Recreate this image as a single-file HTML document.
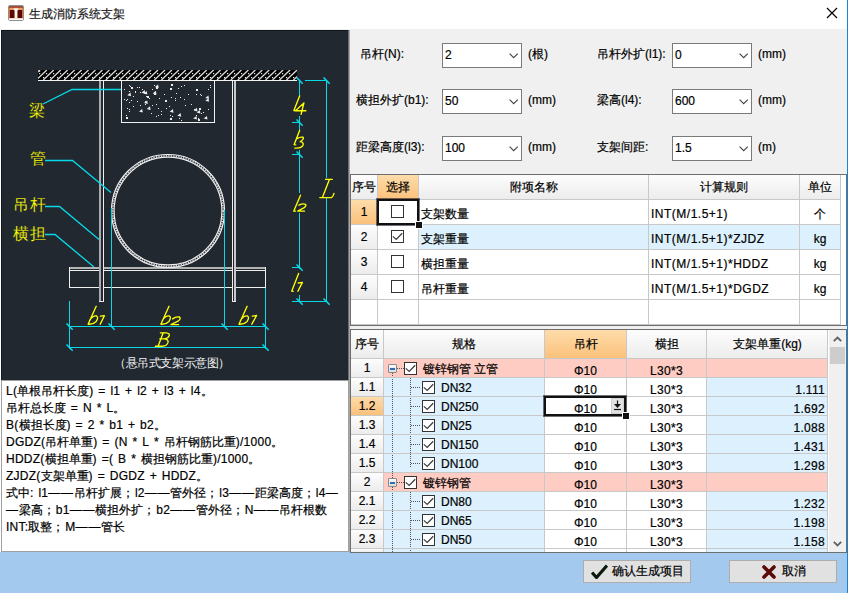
<!DOCTYPE html><html><head><meta charset="utf-8"><style>
*{margin:0;padding:0;box-sizing:border-box}
html,body{width:848px;height:593px;overflow:hidden;background:#f0f0f0;font-family:"Liberation Sans",sans-serif;font-size:12px;color:#000;-webkit-text-stroke:0.2px currentColor}
.a{position:absolute}
.t{position:absolute;white-space:nowrap;line-height:14px}
#title{left:0;top:0;width:848px;height:29px;background:#fff}
#rb{left:847px;top:0;width:1px;height:593px;background:#1883d7}
#txt{left:1px;top:380px;width:348px;height:172px;background:#fff;border:1px solid #a0a0a0}
#txt div{position:absolute;left:4px;white-space:nowrap;line-height:17px;word-spacing:1.5px}
#bottom{left:0;top:552px;width:847px;height:41px;background:#a4c9ee}
.btn{position:absolute;height:23px;background:#e1e1e1;border:1px solid #adadad}
.cb{position:absolute;width:80px;height:25px;background:#fff;border:1px solid #7a7a7a}
.cb span{position:absolute;left:2px;top:4px;line-height:14px;font-size:12px}
.cb svg{position:absolute;left:66px;top:9px}
.grid{position:absolute;background:#fff;border:1px solid #6e6e6e;overflow:hidden}
.chk{position:absolute;width:13px;height:13px;border:1px solid #333;background:#fff}
.chk svg{position:absolute;left:1px;top:1px}
</style></head><body>
<div id="title" class="a">
<svg class="a" style="left:8px;top:5px" width="16" height="16" viewBox="0 0 16 16">
<rect x="0.5" y="0.5" width="15" height="15" rx="1.2" fill="#f2f2f2" stroke="#8e8e8e"/>
<rect x="1" y="1" width="14" height="12.5" fill="#d8702c"/>
<rect x="1" y="1" width="14" height="1.8" fill="#a44a38"/>
<rect x="2" y="5" width="4.5" height="8" fill="#5c0606"/>
<rect x="9.5" y="5" width="4.5" height="8" fill="#5c0606"/>
<rect x="1.5" y="3" width="5" height="1.8" fill="#f0a060"/>
<rect x="9.5" y="3" width="5" height="1.8" fill="#f0a060"/>
<path d="M5.8 3.2h4.4v2h-0.9v8.3h-2.6v-8.3h-0.9z" fill="#eef8f8"/>
<rect x="1" y="13.5" width="14" height="1.5" fill="#fafafa"/>
</svg>
<div class="t" style="left:29px;top:7px;color:#1a1a1a">生成消防系统支架</div>
<svg class="a" style="left:826px;top:7px" width="12" height="12" viewBox="0 0 12 12"><path d="M1 1L11 11M11 1L1 11" stroke="#000" stroke-width="1.2"/></svg>
</div>
<div id="rb" class="a"></div>
<svg class="a" style="left:1px;top:30px" width="348" height="350" viewBox="1 30 348 350" shape-rendering="auto">
<rect x="1" y="30" width="348" height="350" fill="#212830"/>
<rect x="1" y="30" width="348" height="1" fill="#10161c"/><rect x="1" y="30" width="1" height="350" fill="#10161c"/>
<rect x="348" y="30" width="1" height="350" fill="#6a6f76"/>
<defs><clipPath id="slab"><rect x="38" y="70" width="259" height="10"/></clipPath></defs>
<rect x="38" y="70" width="259" height="10" fill="#000"/>
<g clip-path="url(#slab)" stroke="#dcdcdc" stroke-width="1.3">
<line x1="29.35" y1="80" x2="39.85" y2="70"/>
<line x1="36.30" y1="80" x2="46.80" y2="70"/>
<line x1="43.25" y1="80" x2="53.75" y2="70"/>
<line x1="50.20" y1="80" x2="60.70" y2="70"/>
<line x1="57.15" y1="80" x2="67.65" y2="70"/>
<line x1="64.10" y1="80" x2="74.60" y2="70"/>
<line x1="71.05" y1="80" x2="81.55" y2="70"/>
<line x1="78.00" y1="80" x2="88.50" y2="70"/>
<line x1="84.95" y1="80" x2="95.45" y2="70"/>
<line x1="91.90" y1="80" x2="102.40" y2="70"/>
<line x1="98.85" y1="80" x2="109.35" y2="70"/>
<line x1="105.80" y1="80" x2="116.30" y2="70"/>
<line x1="112.75" y1="80" x2="123.25" y2="70"/>
<line x1="119.70" y1="80" x2="130.20" y2="70"/>
<line x1="126.65" y1="80" x2="137.15" y2="70"/>
<line x1="133.60" y1="80" x2="144.10" y2="70"/>
<line x1="140.55" y1="80" x2="151.05" y2="70"/>
<line x1="147.50" y1="80" x2="158.00" y2="70"/>
<line x1="154.45" y1="80" x2="164.95" y2="70"/>
<line x1="161.40" y1="80" x2="171.90" y2="70"/>
<line x1="168.35" y1="80" x2="178.85" y2="70"/>
<line x1="175.30" y1="80" x2="185.80" y2="70"/>
<line x1="182.25" y1="80" x2="192.75" y2="70"/>
<line x1="189.20" y1="80" x2="199.70" y2="70"/>
<line x1="196.15" y1="80" x2="206.65" y2="70"/>
<line x1="203.10" y1="80" x2="213.60" y2="70"/>
<line x1="210.05" y1="80" x2="220.55" y2="70"/>
<line x1="217.00" y1="80" x2="227.50" y2="70"/>
<line x1="223.95" y1="80" x2="234.45" y2="70"/>
<line x1="230.90" y1="80" x2="241.40" y2="70"/>
<line x1="237.85" y1="80" x2="248.35" y2="70"/>
<line x1="244.80" y1="80" x2="255.30" y2="70"/>
<line x1="251.75" y1="80" x2="262.25" y2="70"/>
<line x1="258.70" y1="80" x2="269.20" y2="70"/>
<line x1="265.65" y1="80" x2="276.15" y2="70"/>
<line x1="272.60" y1="80" x2="283.10" y2="70"/>
<line x1="279.55" y1="80" x2="290.05" y2="70"/>
<line x1="286.50" y1="80" x2="297.00" y2="70"/>
<line x1="293.45" y1="80" x2="303.95" y2="70"/>
</g>
<g fill="#e8e8e8">
<rect x="39" y="73" width="1.2" height="1.2"/>
<rect x="46" y="73" width="1.2" height="1.2"/>
<rect x="43" y="77" width="1.2" height="1.2"/>
<rect x="53" y="73" width="1.2" height="1.2"/>
<rect x="50" y="77" width="1.2" height="1.2"/>
<rect x="60" y="73" width="1.2" height="1.2"/>
<rect x="57" y="77" width="1.2" height="1.2"/>
<rect x="67" y="73" width="1.2" height="1.2"/>
<rect x="64" y="77" width="1.2" height="1.2"/>
<rect x="74" y="73" width="1.2" height="1.2"/>
<rect x="71" y="77" width="1.2" height="1.2"/>
<rect x="81" y="73" width="1.2" height="1.2"/>
<rect x="78" y="77" width="1.2" height="1.2"/>
<rect x="88" y="73" width="1.2" height="1.2"/>
<rect x="85" y="77" width="1.2" height="1.2"/>
<rect x="95" y="73" width="1.2" height="1.2"/>
<rect x="92" y="77" width="1.2" height="1.2"/>
<rect x="102" y="73" width="1.2" height="1.2"/>
<rect x="99" y="77" width="1.2" height="1.2"/>
<rect x="109" y="73" width="1.2" height="1.2"/>
<rect x="106" y="77" width="1.2" height="1.2"/>
<rect x="116" y="73" width="1.2" height="1.2"/>
<rect x="113" y="77" width="1.2" height="1.2"/>
<rect x="122" y="73" width="1.2" height="1.2"/>
<rect x="119" y="77" width="1.2" height="1.2"/>
<rect x="129" y="73" width="1.2" height="1.2"/>
<rect x="126" y="77" width="1.2" height="1.2"/>
<rect x="136" y="73" width="1.2" height="1.2"/>
<rect x="133" y="77" width="1.2" height="1.2"/>
<rect x="143" y="73" width="1.2" height="1.2"/>
<rect x="140" y="77" width="1.2" height="1.2"/>
<rect x="150" y="73" width="1.2" height="1.2"/>
<rect x="147" y="77" width="1.2" height="1.2"/>
<rect x="157" y="73" width="1.2" height="1.2"/>
<rect x="154" y="77" width="1.2" height="1.2"/>
<rect x="164" y="73" width="1.2" height="1.2"/>
<rect x="161" y="77" width="1.2" height="1.2"/>
<rect x="171" y="73" width="1.2" height="1.2"/>
<rect x="168" y="77" width="1.2" height="1.2"/>
<rect x="178" y="73" width="1.2" height="1.2"/>
<rect x="175" y="77" width="1.2" height="1.2"/>
<rect x="185" y="73" width="1.2" height="1.2"/>
<rect x="182" y="77" width="1.2" height="1.2"/>
<rect x="192" y="73" width="1.2" height="1.2"/>
<rect x="189" y="77" width="1.2" height="1.2"/>
<rect x="199" y="73" width="1.2" height="1.2"/>
<rect x="196" y="77" width="1.2" height="1.2"/>
<rect x="206" y="73" width="1.2" height="1.2"/>
<rect x="203" y="77" width="1.2" height="1.2"/>
<rect x="213" y="73" width="1.2" height="1.2"/>
<rect x="210" y="77" width="1.2" height="1.2"/>
<rect x="220" y="73" width="1.2" height="1.2"/>
<rect x="217" y="77" width="1.2" height="1.2"/>
<rect x="227" y="73" width="1.2" height="1.2"/>
<rect x="224" y="77" width="1.2" height="1.2"/>
<rect x="234" y="73" width="1.2" height="1.2"/>
<rect x="231" y="77" width="1.2" height="1.2"/>
<rect x="241" y="73" width="1.2" height="1.2"/>
<rect x="238" y="77" width="1.2" height="1.2"/>
<rect x="248" y="73" width="1.2" height="1.2"/>
<rect x="245" y="77" width="1.2" height="1.2"/>
<rect x="254" y="73" width="1.2" height="1.2"/>
<rect x="251" y="77" width="1.2" height="1.2"/>
<rect x="261" y="73" width="1.2" height="1.2"/>
<rect x="258" y="77" width="1.2" height="1.2"/>
<rect x="268" y="73" width="1.2" height="1.2"/>
<rect x="265" y="77" width="1.2" height="1.2"/>
<rect x="275" y="73" width="1.2" height="1.2"/>
<rect x="272" y="77" width="1.2" height="1.2"/>
<rect x="282" y="73" width="1.2" height="1.2"/>
<rect x="279" y="77" width="1.2" height="1.2"/>
<rect x="289" y="73" width="1.2" height="1.2"/>
<rect x="286" y="77" width="1.2" height="1.2"/>
<rect x="293" y="77" width="1.2" height="1.2"/>
<rect x="39" y="70.5" width="1.2" height="1.2"/>
</g>
<rect x="38" y="80" width="259" height="1" fill="#f4f4f4"/>
<rect x="121" y="81" width="1" height="42" fill="#f0f0f0"/>
<rect x="214" y="81" width="1" height="42" fill="#f0f0f0"/>
<rect x="121" y="122" width="94" height="1" fill="#f0f0f0"/>
<g fill="#ececec">
<rect x="152" y="89" width="1" height="1"/>
<rect x="181" y="86" width="1" height="1"/>
<rect x="171" y="97" width="1" height="1"/>
<rect x="129" y="102" width="1" height="1"/>
<rect x="127" y="99" width="1" height="1"/>
<rect x="130" y="86" width="1" height="1"/>
<rect x="161" y="114" width="1" height="1"/>
<rect x="135" y="91" width="1" height="1"/>
<rect x="179" y="118" width="1" height="1"/>
<rect x="175" y="98" width="1" height="1"/>
<rect x="210" y="85" width="1" height="1"/>
<rect x="200" y="94" width="1" height="1"/>
<rect x="137" y="87" width="1" height="1"/>
<rect x="151" y="113" width="1" height="1"/>
<rect x="140" y="105" width="1" height="1"/>
<rect x="180" y="97" width="1" height="1"/>
<rect x="172" y="85" width="1" height="1"/>
<rect x="129" y="91" width="1" height="1"/>
<rect x="184" y="99" width="1" height="1"/>
<rect x="152" y="105" width="1" height="1"/>
<rect x="164" y="94" width="1" height="1"/>
<rect x="194" y="109" width="1" height="1"/>
<rect x="145" y="104" width="1" height="1"/>
<rect x="170" y="115" width="1" height="1"/>
<rect x="188" y="94" width="1" height="1"/>
<rect x="210" y="87" width="1" height="1"/>
<rect x="161" y="111" width="1" height="1"/>
<rect x="137" y="101" width="1" height="1"/>
<rect x="127" y="108" width="1" height="1"/>
<rect x="191" y="104" width="1" height="1"/>
<rect x="201" y="95" width="1" height="1"/>
<rect x="185" y="105" width="1" height="1"/>
<rect x="175" y="100" width="1" height="1"/>
<rect x="198" y="118" width="1" height="1"/>
<rect x="166" y="108" width="1" height="1"/>
<rect x="129" y="109" width="1" height="1"/>
<rect x="181" y="120" width="1" height="1"/>
<rect x="196" y="94" width="1" height="1"/>
<rect x="158" y="108" width="1" height="1"/>
<rect x="126" y="100" width="1" height="1"/>
<rect x="139" y="87" width="1" height="1"/>
<rect x="129" y="111" width="1" height="1"/>
<rect x="135" y="92" width="1" height="1"/>
<rect x="158" y="115" width="1" height="1"/>
<rect x="131" y="100" width="1" height="1"/>
<rect x="172" y="116" width="1" height="1"/>
<rect x="196" y="115" width="1" height="1"/>
<rect x="149" y="98" width="1" height="1"/>
<rect x="156" y="116" width="1" height="1"/>
<rect x="208" y="89" width="1" height="1"/>
<rect x="140" y="92" width="1" height="1"/>
<rect x="145" y="101" width="1" height="1"/>
<rect x="176" y="93" width="1" height="1"/>
<rect x="124" y="99" width="1" height="1"/>
<rect x="156" y="104" width="1" height="1"/>
<rect x="208" y="109" width="1" height="1"/>
<rect x="169" y="106" width="1" height="1"/>
<rect x="184" y="85" width="1" height="1"/>
<rect x="203" y="112" width="1" height="1"/>
<rect x="201" y="113" width="1" height="1"/>
<rect x="159" y="98" width="1" height="1"/>
<rect x="133" y="106" width="1" height="1"/>
<rect x="129" y="85" width="1" height="1"/>
<rect x="142" y="89" width="1" height="1"/>
<rect x="154" y="85" width="1" height="1"/>
<rect x="124" y="89" width="1" height="1"/>
<rect x="133" y="96" width="1" height="1"/>
<rect x="126" y="115" width="1" height="1"/>
<rect x="178" y="88" width="1" height="1"/>
<rect x="146" y="96" width="1" height="1"/>
<rect x="156" y="87" width="2" height="2"/>
<rect x="198" y="119" width="2" height="2"/>
<rect x="165" y="100" width="2" height="2"/>
<rect x="131" y="87" width="2" height="2"/>
<rect x="154" y="93" width="2" height="2"/>
<rect x="196" y="89" width="2" height="2"/>
<rect x="126" y="117" width="2" height="2"/>
<rect x="170" y="88" width="2" height="2"/>
<rect x="171" y="84" width="2" height="2"/>
<rect x="170" y="118" width="2" height="2"/>
<rect x="199" y="108" width="2" height="2"/>
<rect x="147" y="96" width="2" height="2"/>
<path d="M139.0 111.5 l3.2 -2.6 l0.6 3.6 z"/>
<path d="M169.7 111.7 l3.2 -2.6 l0.6 3.6 z"/>
<path d="M152.7 93.4 l3.2 -2.6 l0.6 3.6 z"/>
<path d="M193.2 118.5 l3.2 -2.6 l0.6 3.6 z"/>
<path d="M196.6 112.6 l3.2 -2.6 l0.6 3.6 z"/>
<path d="M193.7 110.4 l3.2 -2.6 l0.6 3.6 z"/>
<path d="M144.0 103.1 l3.2 -2.6 l0.6 3.6 z"/>
<path d="M154.9 87.0 l3.2 -2.6 l0.6 3.6 z"/>
<path d="M127.3 95.2 l3.2 -2.6 l0.6 3.6 z"/>
<path d="M146.8 108.9 l3.2 -2.6 l0.6 3.6 z"/>
<path d="M205.3 100.8 l3.2 -2.6 l0.6 3.6 z"/>
<path d="M203.7 118.6 l3.2 -2.6 l0.6 3.6 z"/>
<path d="M205.2 98.0 l3.2 -2.6 l0.6 3.6 z"/>
<path d="M143.5 93.5 l3.2 -2.6 l0.6 3.6 z"/>
<path d="M141.5 92.7 l3.2 -2.6 l0.6 3.6 z"/>
<path d="M177.4 115.7 l3.2 -2.6 l0.6 3.6 z"/>
</g>
<rect x="69" y="267" width="197" height="2" fill="#b4b4b4"/>
<rect x="69" y="270" width="197" height="1" fill="#f0f0f0"/>
<rect x="69" y="287" width="197" height="1" fill="#f0f0f0"/>
<rect x="69" y="267" width="1" height="21" fill="#f0f0f0"/>
<rect x="265" y="267" width="1" height="21" fill="#f0f0f0"/>
<rect x="99" y="81" width="5" height="221" fill="#212830"/>
<rect x="99" y="81" width="2" height="221" fill="#a8aaad"/>
<rect x="103" y="81" width="1" height="221" fill="#eeeeee"/>
<rect x="99" y="301" width="5" height="1" fill="#e8e8e8"/>
<rect x="232" y="81" width="4" height="221" fill="#212830"/>
<rect x="232" y="81" width="1" height="221" fill="#eeeeee"/>
<rect x="234" y="81" width="2" height="221" fill="#c8c8c8"/>
<rect x="232" y="301" width="4" height="1" fill="#e8e8e8"/>
<circle cx="168" cy="211" r="56.5" fill="none" stroke="#f0f0f0" stroke-width="1.2"/>
<circle cx="168" cy="211" r="53.9" fill="none" stroke="#f0f0f0" stroke-width="1.2"/>
<circle cx="168" cy="211" r="55.2" fill="none" stroke="#d8d8d8" stroke-width="1.6" stroke-dasharray="1.3 1.2"/>
<polyline points="43.0,104.0 72.0,89.5 121.0,89.5" fill="none" stroke="#08d8e8" stroke-width="1.3"/>
<polyline points="45.0,160.5 72.5,160.5 111.0,192.5" fill="none" stroke="#08d8e8" stroke-width="1.3"/>
<polyline points="45.0,206.5 59.5,206.5 99.0,239.5" fill="none" stroke="#08d8e8" stroke-width="1.3"/>
<polyline points="45.0,234.5 55.0,234.5 94.0,267.0" fill="none" stroke="#08d8e8" stroke-width="1.3"/>
<rect x="111" y="208" width="1" height="119" fill="#08d8e8"/>
<rect x="224" y="210" width="1" height="117" fill="#08d8e8"/>
<rect x="69" y="301" width="1" height="48" fill="#08d8e8"/>
<rect x="265" y="288" width="1" height="61" fill="#08d8e8"/>
<rect x="69" y="326" width="197" height="1" fill="#08d8e8"/>
<rect x="69" y="347" width="197" height="1" fill="#08d8e8"/>
<line x1="66.5" y1="323.5" x2="72.7" y2="329.7" stroke="#08d8e8" stroke-width="1.6"/>
<line x1="108.5" y1="323.5" x2="114.7" y2="329.7" stroke="#08d8e8" stroke-width="1.6"/>
<line x1="221.5" y1="323.5" x2="227.7" y2="329.7" stroke="#08d8e8" stroke-width="1.6"/>
<line x1="262.5" y1="323.5" x2="268.7" y2="329.7" stroke="#08d8e8" stroke-width="1.6"/>
<line x1="66.5" y1="344.5" x2="72.7" y2="350.7" stroke="#08d8e8" stroke-width="1.6"/>
<line x1="262.5" y1="344.5" x2="268.7" y2="350.7" stroke="#08d8e8" stroke-width="1.6"/>
<rect x="299" y="80" width="1" height="222" fill="#08d8e8"/>
<rect x="326" y="80" width="1" height="222" fill="#08d8e8"/>
<rect x="305" y="80" width="22" height="1" fill="#08d8e8"/>
<rect x="292" y="122" width="8" height="1" fill="#08d8e8"/>
<rect x="292" y="154" width="8" height="1" fill="#08d8e8"/>
<rect x="292" y="267" width="8" height="1" fill="#08d8e8"/>
<rect x="292" y="301" width="35" height="1" fill="#08d8e8"/>
<rect x="296" y="96" width="8" height="20" fill="#212830"/>
<rect x="296" y="130" width="8" height="20" fill="#212830"/>
<rect x="296" y="193" width="8" height="20" fill="#212830"/>
<rect x="296" y="269" width="8" height="26" fill="#212830"/>
<rect x="323" y="178" width="8" height="20" fill="#212830"/>
<line x1="296.5" y1="77.5" x2="302.7" y2="83.7" stroke="#08d8e8" stroke-width="1.6"/>
<line x1="296.5" y1="119.5" x2="302.7" y2="125.7" stroke="#08d8e8" stroke-width="1.6"/>
<line x1="296.5" y1="151.5" x2="302.7" y2="157.7" stroke="#08d8e8" stroke-width="1.6"/>
<line x1="296.5" y1="264.5" x2="302.7" y2="270.7" stroke="#08d8e8" stroke-width="1.6"/>
<line x1="296.5" y1="298.5" x2="302.7" y2="304.7" stroke="#08d8e8" stroke-width="1.6"/>
<line x1="323.5" y1="77.5" x2="329.7" y2="83.7" stroke="#08d8e8" stroke-width="1.6"/>
<line x1="323.5" y1="298.5" x2="329.7" y2="304.7" stroke="#08d8e8" stroke-width="1.6"/>
<path d="M299.6 96 L293.9 110.6 L295.6 110.8 M303.9 103 L295.4 110.7 L305.9 110.7 M303.9 103 L301.1 114.3 M299.6 130.5 L294.1 144.7 L295.8 144.8 M297.2 138.6 Q300 136.6 303 137.2 Q304.4 138.6 300.2 141.7 Q304 142.2 303 145.3 Q301.4 148.6 294.8 148.1 M300.5 195.2 L293.8 211.1 L295.6 211.1 M299 205.2 Q302.5 203.2 305.4 204.3 Q306.8 205.6 304.2 207.6 L297.8 211.1 L304.6 211.1 M298.6 273.5 L291.7 291.2 L293.3 291.3 M298.2 283 L302.4 282.4 L297.9 291.3 M325.6 179.4 L332.2 179.4 M329.4 179.4 L322.4 197.6 M319.8 197.6 L331.5 197.6 Q333.3 196.5 334 193.4 M96.2 306.3 L88.1 324.2 M89.6 320.4 Q93.2 315.2 96.6 316 Q98.8 317.4 96.2 321.4 Q93.0 324.6 88.1 324.2 M100.4 316.2 L104.4 315.6 L100.2 324.2 M169.0 306.3 L160.9 324.2 M162.4 320.4 Q166.0 315.2 169.4 316 Q171.6 317.4 169.0 321.4 Q165.8 324.6 160.9 324.2 M172.6 318.9 Q176 316.2 179.4 317 Q181.4 318.6 178 321.2 L171 324.6 L178.6 324.6 M247.1 306.3 L239.0 324.2 M240.5 320.4 Q244.1 315.2 247.5 316 Q249.7 317.4 247.1 321.4 Q243.9 324.6 239.0 324.2 M252.3 316.2 L256.6 315.5 L251.8 324.2 M160.4 332.8 L166.4 332.8 Q169.8 333.2 169.2 335.6 Q168.4 338.4 164.6 338.8 L159.8 338.8 M164.6 338.8 Q168.6 339.4 168 342.4 Q167 346 162.6 346.2 L155.3 346.2 M163.2 332.8 L158.1 346.2" fill="none" stroke="#ffff00" stroke-width="1.35" stroke-linecap="round" stroke-linejoin="round"/>
</svg>
<div class="t" style="left:29px;top:102px;color:#ffff00;font-size:16px;line-height:18px;-webkit-text-stroke:0.15px #212830;letter-spacing:0px">梁</div>
<div class="t" style="left:30px;top:150px;color:#ffff00;font-size:16px;line-height:18px;-webkit-text-stroke:0.15px #212830;letter-spacing:0px">管</div>
<div class="t" style="left:13px;top:196px;color:#ffff00;font-size:16px;line-height:18px;-webkit-text-stroke:0.15px #212830;letter-spacing:1px">吊杆</div>
<div class="t" style="left:13px;top:225px;color:#ffff00;font-size:16px;line-height:18px;-webkit-text-stroke:0.15px #212830;letter-spacing:1px">横担</div>
<div class="t" style="left:114px;top:356px;color:#f0f0f0;font-size:12px;letter-spacing:-0.4px;-webkit-text-stroke:0">（悬吊式支架示意图）</div>
<div id="txt" class="a">
<div style="top:2px"><span style="letter-spacing:0.25px">L(</span>单根吊杆长度<span style="letter-spacing:0.25px">)</span> <span style="letter-spacing:0.25px">=</span> <span style="letter-spacing:0.25px">l1</span> <span style="letter-spacing:0.25px">+</span> <span style="letter-spacing:0.25px">l2</span> <span style="letter-spacing:0.25px">+</span> <span style="letter-spacing:0.25px">l3</span> <span style="letter-spacing:0.25px">+</span> <span style="letter-spacing:0.25px">l4</span>。</div>
<div style="top:19px">吊杆总长度 <span style="letter-spacing:0.25px">=</span> <span style="letter-spacing:0.25px">N</span> <span style="letter-spacing:0.25px">*</span> <span style="letter-spacing:0.25px">L</span>。</div>
<div style="top:36px"><span style="letter-spacing:0.25px">B(</span>横担长度<span style="letter-spacing:0.25px">)</span> <span style="letter-spacing:0.25px">=</span> <span style="letter-spacing:0.25px">2</span> <span style="letter-spacing:0.25px">*</span> <span style="letter-spacing:0.25px">b1</span> <span style="letter-spacing:0.25px">+</span> <span style="letter-spacing:0.25px">b2</span>。</div>
<div style="top:53px"><span style="letter-spacing:0.25px">DGDZ(</span>吊杆单重<span style="letter-spacing:0.25px">)</span> <span style="letter-spacing:0.25px">=</span> <span style="letter-spacing:0.25px">(N</span> <span style="letter-spacing:0.25px">*</span> <span style="letter-spacing:0.25px">L</span> <span style="letter-spacing:0.25px">*</span> 吊杆钢筋比重<span style="letter-spacing:0.25px">)/1000</span>。</div>
<div style="top:70px"><span style="letter-spacing:0.25px">HDDZ(</span>横担单重<span style="letter-spacing:0.25px">)</span> <span style="letter-spacing:0.25px">=(</span> <span style="letter-spacing:0.25px">B</span> <span style="letter-spacing:0.25px">*</span> 横担钢筋比重<span style="letter-spacing:0.25px">)/1000</span>。</div>
<div style="top:87px"><span style="letter-spacing:0.25px">ZJDZ(</span>支架单重<span style="letter-spacing:0.25px">)</span> <span style="letter-spacing:0.25px">=</span> <span style="letter-spacing:0.25px">DGDZ</span> <span style="letter-spacing:0.25px">+</span> <span style="letter-spacing:0.25px">HDDZ</span>。</div>
<div style="top:104px">式中<span style="letter-spacing:0.25px">:</span> <span style="letter-spacing:0.25px">l1</span><span style="letter-spacing:0.8px">——</span>吊杆扩展<span style="letter-spacing:1px">；</span><span style="letter-spacing:0.25px">l2</span><span style="letter-spacing:0.8px">——</span>管外径<span style="letter-spacing:1px">；</span><span style="letter-spacing:0.25px">l3</span><span style="letter-spacing:0.8px">——</span>距梁高度<span style="letter-spacing:1px">；</span><span style="letter-spacing:0.25px">l4</span><span style="letter-spacing:0.8px">—</span></div>
<div style="top:121px"><span style="letter-spacing:0.8px">—</span>梁高<span style="letter-spacing:1px">；</span><span style="letter-spacing:0.25px">b1</span><span style="letter-spacing:0.8px">——</span>横担外扩<span style="letter-spacing:1px">；</span><span style="letter-spacing:0.25px">b2</span><span style="letter-spacing:0.8px">——</span>管外径<span style="letter-spacing:1px">；</span><span style="letter-spacing:0.25px">N</span><span style="letter-spacing:0.8px">——</span>吊杆根数</div>
<div style="top:138px"><span style="letter-spacing:0.25px">INT:</span>取整<span style="letter-spacing:1px">；</span><span style="letter-spacing:0.25px">M</span><span style="letter-spacing:0.8px">——</span>管长</div>
</div>
<div class="t" style="left:360px;top:47px">吊杆(N):</div>
<div class="cb" style="left:442px;top:43px"><span>2</span><svg width="10" height="6" viewBox="0 0 10 6"><path d="M0.6 0.6L4.7 4.7L8.8 0.6" fill="none" stroke="#444" stroke-width="1.1"/></svg></div>
<div class="t" style="left:528px;top:47px">(根)</div>
<div class="t" style="left:597px;top:47px">吊杆外扩(l1):</div>
<div class="cb" style="left:672px;top:43px"><span>0</span><svg width="10" height="6" viewBox="0 0 10 6"><path d="M0.6 0.6L4.7 4.7L8.8 0.6" fill="none" stroke="#444" stroke-width="1.1"/></svg></div>
<div class="t" style="left:758px;top:47px">(mm)</div>
<div class="t" style="left:356px;top:93px">横担外扩(b1):</div>
<div class="cb" style="left:442px;top:89px"><span>50</span><svg width="10" height="6" viewBox="0 0 10 6"><path d="M0.6 0.6L4.7 4.7L8.8 0.6" fill="none" stroke="#444" stroke-width="1.1"/></svg></div>
<div class="t" style="left:528px;top:93px">(mm)</div>
<div class="t" style="left:597px;top:93px">梁高(l4):</div>
<div class="cb" style="left:672px;top:89px"><span>600</span><svg width="10" height="6" viewBox="0 0 10 6"><path d="M0.6 0.6L4.7 4.7L8.8 0.6" fill="none" stroke="#444" stroke-width="1.1"/></svg></div>
<div class="t" style="left:758px;top:93px">(mm)</div>
<div class="t" style="left:356px;top:140px">距梁高度(l3):</div>
<div class="cb" style="left:442px;top:136px"><span>100</span><svg width="10" height="6" viewBox="0 0 10 6"><path d="M0.6 0.6L4.7 4.7L8.8 0.6" fill="none" stroke="#444" stroke-width="1.1"/></svg></div>
<div class="t" style="left:528px;top:140px">(mm)</div>
<div class="t" style="left:597px;top:140px">支架间距:</div>
<div class="cb" style="left:672px;top:136px"><span>1.5</span><svg width="10" height="6" viewBox="0 0 10 6"><path d="M0.6 0.6L4.7 4.7L8.8 0.6" fill="none" stroke="#444" stroke-width="1.1"/></svg></div>
<div class="t" style="left:758px;top:140px">(m)</div>
<div id="bottom" class="a"></div>
<div class="a" style="left:349px;top:30px;width:1px;height:522px;background:#a8a8a8"></div>
<div class="a" style="left:0px;top:29px;width:1px;height:523px;background:#fff"></div>
<div class="a" style="left:350px;top:174px;width:497px;height:152px;background:#fff;border:1px solid #6e6e6e"></div>
<div class="a" style="left:351px;top:175px;width:26px;height:24px;background:linear-gradient(#fdfdfd,#ececec);"></div>
<div class="a" style="left:378px;top:175px;width:40px;height:24px;background:linear-gradient(#fedcaa,#fbc17c);"></div>
<div class="a" style="left:419px;top:175px;width:229px;height:24px;background:linear-gradient(#fdfdfd,#ececec);"></div>
<div class="a" style="left:649px;top:175px;width:150px;height:24px;background:linear-gradient(#fdfdfd,#ececec);"></div>
<div class="a" style="left:800px;top:175px;width:40px;height:24px;background:linear-gradient(#fdfdfd,#ececec);"></div>
<div class="a" style="left:841px;top:175px;width:5px;height:24px;background:#fff;"></div>
<div class="a" style="left:351px;top:200px;width:26px;height:24px;background:linear-gradient(#fedcaa,#fbc17c);"></div>
<div class="a" style="left:351px;top:225px;width:26px;height:24px;background:linear-gradient(#fdfdfd,#ececec);"></div>
<div class="a" style="left:351px;top:250px;width:26px;height:24px;background:linear-gradient(#fdfdfd,#ececec);"></div>
<div class="a" style="left:351px;top:275px;width:26px;height:24px;background:linear-gradient(#fdfdfd,#ececec);"></div>
<div class="a" style="left:419px;top:225px;width:421px;height:24px;background:#dcf1fd;"></div>
<div class="a" style="left:377px;top:175px;width:1px;height:150px;background:#c8c8c8;"></div>
<div class="a" style="left:418px;top:175px;width:1px;height:150px;background:#c8c8c8;"></div>
<div class="a" style="left:648px;top:175px;width:1px;height:150px;background:#c8c8c8;"></div>
<div class="a" style="left:799px;top:175px;width:1px;height:150px;background:#c8c8c8;"></div>
<div class="a" style="left:840px;top:175px;width:1px;height:150px;background:#c8c8c8;"></div>
<div class="a" style="left:351px;top:199px;width:489px;height:1px;background:#c8c8c8;"></div>
<div class="a" style="left:351px;top:224px;width:489px;height:1px;background:#c8c8c8;"></div>
<div class="a" style="left:351px;top:249px;width:489px;height:1px;background:#c8c8c8;"></div>
<div class="a" style="left:351px;top:274px;width:489px;height:1px;background:#c8c8c8;"></div>
<div class="a" style="left:351px;top:299px;width:489px;height:1px;background:#c8c8c8;"></div>
<div class="a" style="left:351px;top:324px;width:489px;height:1px;background:#c8c8c8;"></div>
<div class="t" style="left:351px;top:180px;width:26px;text-align:center;">序号</div>
<div class="t" style="left:378px;top:180px;width:40px;text-align:center;">选择</div>
<div class="t" style="left:419px;top:180px;width:230px;text-align:center;">附项名称</div>
<div class="t" style="left:649px;top:180px;width:150px;text-align:center;">计算规则</div>
<div class="t" style="left:800px;top:180px;width:40px;text-align:center;">单位</div>
<div class="t" style="left:351px;top:205px;width:26px;text-align:center;">1</div>
<div class="chk" style="left:391px;top:205px"></div>
<div class="t" style="left:421px;top:207px;">支架数量</div>
<div class="t" style="left:651px;top:207px;letter-spacing:0.5px">INT(M/1.5+1)</div>
<div class="t" style="left:800px;top:207px;width:40px;text-align:center;">个</div>
<div class="t" style="left:351px;top:230px;width:26px;text-align:center;">2</div>
<div class="chk" style="left:391px;top:230px"><svg width="13" height="13" viewBox="0 0 13 13" style="left:-1px;top:-1px"><path d="M1.8 6.4L5.2 9.4L11.2 3.2" fill="none" stroke="#3c3c3c" stroke-width="1.25"/></svg></div>
<div class="t" style="left:421px;top:232px;">支架重量</div>
<div class="t" style="left:651px;top:232px;letter-spacing:0.5px">INT(M/1.5+1)*ZJDZ</div>
<div class="t" style="left:800px;top:232px;width:40px;text-align:center;">kg</div>
<div class="t" style="left:351px;top:255px;width:26px;text-align:center;">3</div>
<div class="chk" style="left:391px;top:255px"></div>
<div class="t" style="left:421px;top:257px;">横担重量</div>
<div class="t" style="left:651px;top:257px;letter-spacing:0.5px">INT(M/1.5+1)*HDDZ</div>
<div class="t" style="left:800px;top:257px;width:40px;text-align:center;">kg</div>
<div class="t" style="left:351px;top:280px;width:26px;text-align:center;">4</div>
<div class="chk" style="left:391px;top:280px"></div>
<div class="t" style="left:421px;top:282px;">吊杆重量</div>
<div class="t" style="left:651px;top:282px;letter-spacing:0.5px">INT(M/1.5+1)*DGDZ</div>
<div class="t" style="left:800px;top:282px;width:40px;text-align:center;">kg</div>
<div class="a" style="left:377px;top:199px;width:42px;height:26px;background:transparent;border:2px solid #111;box-shadow:0 0 0 1px rgba(20,20,40,0.6)"></div>
<div class="a" style="left:415px;top:221px;width:8px;height:8px;background:#111;border:1px solid #fff"></div>
<div class="a" style="left:350px;top:329px;width:497px;height:224px;background:#fff;border:1px solid #6e6e6e"></div>
<div class="a" style="left:351px;top:330px;width:32px;height:28px;background:linear-gradient(#fdfdfd,#ececec);"></div>
<div class="a" style="left:384px;top:330px;width:160px;height:28px;background:linear-gradient(#fdfdfd,#ececec);"></div>
<div class="a" style="left:545px;top:330px;width:81px;height:28px;background:linear-gradient(#fedcaa,#fbc17c);"></div>
<div class="a" style="left:627px;top:330px;width:79px;height:28px;background:linear-gradient(#fdfdfd,#ececec);"></div>
<div class="a" style="left:707px;top:330px;width:121px;height:28px;background:linear-gradient(#fdfdfd,#ececec);"></div>
<div class="t" style="left:351px;top:337px;width:32px;text-align:center;">序号</div>
<div class="t" style="left:384px;top:337px;width:160px;text-align:center;">规格</div>
<div class="t" style="left:545px;top:337px;width:81px;text-align:center;">吊杆</div>
<div class="t" style="left:627px;top:337px;width:79px;text-align:center;">横担</div>
<div class="t" style="left:707px;top:337px;width:121px;text-align:center;">支架单重(kg)</div>
<div class="a" style="left:351px;top:359px;width:32px;height:18px;background:linear-gradient(#fdfdfd,#ececec);"></div>
<div class="a" style="left:384px;top:359px;width:444px;height:18px;background:#ffccc3;"></div>
<div class="t" style="left:351px;top:361px;width:32px;text-align:center;">1</div>
<div class="t" style="left:545px;top:364px;width:81px;text-align:center;">Φ10</div>
<div class="t" style="left:627px;top:364px;width:79px;text-align:center;letter-spacing:0.3px">L30*3</div>
<div class="a" style="left:388px;top:364px;width:9px;height:9px;background:linear-gradient(#fafafa,#dcdcdc);border:1px solid #8a8a8a;border-radius:1px"></div>
<div class="a" style="left:390px;top:368px;width:5px;height:1.5px;background:#2a6fb5;"></div>
<div class="chk" style="left:404px;top:362px"><svg width="13" height="13" viewBox="0 0 13 13" style="left:-1px;top:-1px"><path d="M1.8 6.4L5.2 9.4L11.2 3.2" fill="none" stroke="#3c3c3c" stroke-width="1.25"/></svg></div>
<div class="t" style="left:423px;top:362px;">镀锌钢管 立管</div>
<svg class="a" style="left:397px;top:368px" width="7" height="1"><line x1="0" y1="0.5" x2="7" y2="0.5" stroke="#555" stroke-dasharray="1 1"/></svg>
<div class="a" style="left:351px;top:378px;width:32px;height:18px;background:linear-gradient(#fdfdfd,#ececec);"></div>
<div class="a" style="left:384px;top:378px;width:160px;height:18px;background:#dcf1fd;"></div>
<div class="a" style="left:707px;top:378px;width:121px;height:18px;background:#dcf1fd;"></div>
<div class="t" style="left:351px;top:380px;width:32px;text-align:center;">1.1</div>
<div class="t" style="left:545px;top:383px;width:81px;text-align:center;">Φ10</div>
<div class="t" style="left:627px;top:383px;width:79px;text-align:center;letter-spacing:0.3px">L30*3</div>
<div class="t" style="left:625px;top:383px;width:200px;text-align:right;letter-spacing:0.3px">1.111</div>
<div class="chk" style="left:422px;top:381px"><svg width="13" height="13" viewBox="0 0 13 13" style="left:-1px;top:-1px"><path d="M1.8 6.4L5.2 9.4L11.2 3.2" fill="none" stroke="#3c3c3c" stroke-width="1.25"/></svg></div>
<div class="t" style="left:441px;top:381px;">DN32</div>
<svg class="a" style="left:411px;top:387px" width="10" height="1"><line x1="0" y1="0.5" x2="10" y2="0.5" stroke="#555" stroke-dasharray="1 1"/></svg>
<div class="a" style="left:351px;top:397px;width:32px;height:18px;background:linear-gradient(#fedcaa,#fbc17c);"></div>
<div class="a" style="left:384px;top:397px;width:160px;height:18px;background:#dcf1fd;"></div>
<div class="a" style="left:707px;top:397px;width:121px;height:18px;background:#dcf1fd;"></div>
<div class="t" style="left:351px;top:399px;width:32px;text-align:center;">1.2</div>
<div class="t" style="left:545px;top:402px;width:81px;text-align:center;">Φ10</div>
<div class="t" style="left:627px;top:402px;width:79px;text-align:center;letter-spacing:0.3px">L30*3</div>
<div class="t" style="left:625px;top:402px;width:200px;text-align:right;letter-spacing:0.3px">1.692</div>
<div class="chk" style="left:422px;top:400px"><svg width="13" height="13" viewBox="0 0 13 13" style="left:-1px;top:-1px"><path d="M1.8 6.4L5.2 9.4L11.2 3.2" fill="none" stroke="#3c3c3c" stroke-width="1.25"/></svg></div>
<div class="t" style="left:441px;top:400px;">DN250</div>
<svg class="a" style="left:411px;top:406px" width="10" height="1"><line x1="0" y1="0.5" x2="10" y2="0.5" stroke="#555" stroke-dasharray="1 1"/></svg>
<div class="a" style="left:351px;top:416px;width:32px;height:18px;background:linear-gradient(#fdfdfd,#ececec);"></div>
<div class="a" style="left:384px;top:416px;width:160px;height:18px;background:#dcf1fd;"></div>
<div class="a" style="left:707px;top:416px;width:121px;height:18px;background:#dcf1fd;"></div>
<div class="t" style="left:351px;top:418px;width:32px;text-align:center;">1.3</div>
<div class="t" style="left:545px;top:421px;width:81px;text-align:center;">Φ10</div>
<div class="t" style="left:627px;top:421px;width:79px;text-align:center;letter-spacing:0.3px">L30*3</div>
<div class="t" style="left:625px;top:421px;width:200px;text-align:right;letter-spacing:0.3px">1.088</div>
<div class="chk" style="left:422px;top:419px"><svg width="13" height="13" viewBox="0 0 13 13" style="left:-1px;top:-1px"><path d="M1.8 6.4L5.2 9.4L11.2 3.2" fill="none" stroke="#3c3c3c" stroke-width="1.25"/></svg></div>
<div class="t" style="left:441px;top:419px;">DN25</div>
<svg class="a" style="left:411px;top:425px" width="10" height="1"><line x1="0" y1="0.5" x2="10" y2="0.5" stroke="#555" stroke-dasharray="1 1"/></svg>
<div class="a" style="left:351px;top:435px;width:32px;height:18px;background:linear-gradient(#fdfdfd,#ececec);"></div>
<div class="a" style="left:384px;top:435px;width:160px;height:18px;background:#dcf1fd;"></div>
<div class="a" style="left:707px;top:435px;width:121px;height:18px;background:#dcf1fd;"></div>
<div class="t" style="left:351px;top:437px;width:32px;text-align:center;">1.4</div>
<div class="t" style="left:545px;top:440px;width:81px;text-align:center;">Φ10</div>
<div class="t" style="left:627px;top:440px;width:79px;text-align:center;letter-spacing:0.3px">L30*3</div>
<div class="t" style="left:625px;top:440px;width:200px;text-align:right;letter-spacing:0.3px">1.431</div>
<div class="chk" style="left:422px;top:438px"><svg width="13" height="13" viewBox="0 0 13 13" style="left:-1px;top:-1px"><path d="M1.8 6.4L5.2 9.4L11.2 3.2" fill="none" stroke="#3c3c3c" stroke-width="1.25"/></svg></div>
<div class="t" style="left:441px;top:438px;">DN150</div>
<svg class="a" style="left:411px;top:444px" width="10" height="1"><line x1="0" y1="0.5" x2="10" y2="0.5" stroke="#555" stroke-dasharray="1 1"/></svg>
<div class="a" style="left:351px;top:454px;width:32px;height:18px;background:linear-gradient(#fdfdfd,#ececec);"></div>
<div class="a" style="left:384px;top:454px;width:160px;height:18px;background:#dcf1fd;"></div>
<div class="a" style="left:707px;top:454px;width:121px;height:18px;background:#dcf1fd;"></div>
<div class="t" style="left:351px;top:456px;width:32px;text-align:center;">1.5</div>
<div class="t" style="left:545px;top:459px;width:81px;text-align:center;">Φ10</div>
<div class="t" style="left:627px;top:459px;width:79px;text-align:center;letter-spacing:0.3px">L30*3</div>
<div class="t" style="left:625px;top:459px;width:200px;text-align:right;letter-spacing:0.3px">1.298</div>
<div class="chk" style="left:422px;top:457px"><svg width="13" height="13" viewBox="0 0 13 13" style="left:-1px;top:-1px"><path d="M1.8 6.4L5.2 9.4L11.2 3.2" fill="none" stroke="#3c3c3c" stroke-width="1.25"/></svg></div>
<div class="t" style="left:441px;top:457px;">DN100</div>
<svg class="a" style="left:411px;top:463px" width="10" height="1"><line x1="0" y1="0.5" x2="10" y2="0.5" stroke="#555" stroke-dasharray="1 1"/></svg>
<div class="a" style="left:351px;top:473px;width:32px;height:18px;background:linear-gradient(#fdfdfd,#ececec);"></div>
<div class="a" style="left:384px;top:473px;width:444px;height:18px;background:#ffccc3;"></div>
<div class="t" style="left:351px;top:475px;width:32px;text-align:center;">2</div>
<div class="t" style="left:545px;top:478px;width:81px;text-align:center;">Φ10</div>
<div class="t" style="left:627px;top:478px;width:79px;text-align:center;letter-spacing:0.3px">L30*3</div>
<div class="a" style="left:388px;top:478px;width:9px;height:9px;background:linear-gradient(#fafafa,#dcdcdc);border:1px solid #8a8a8a;border-radius:1px"></div>
<div class="a" style="left:390px;top:482px;width:5px;height:1.5px;background:#2a6fb5;"></div>
<div class="chk" style="left:404px;top:476px"><svg width="13" height="13" viewBox="0 0 13 13" style="left:-1px;top:-1px"><path d="M1.8 6.4L5.2 9.4L11.2 3.2" fill="none" stroke="#3c3c3c" stroke-width="1.25"/></svg></div>
<div class="t" style="left:423px;top:476px;">镀锌钢管</div>
<svg class="a" style="left:397px;top:482px" width="7" height="1"><line x1="0" y1="0.5" x2="7" y2="0.5" stroke="#555" stroke-dasharray="1 1"/></svg>
<div class="a" style="left:351px;top:492px;width:32px;height:18px;background:linear-gradient(#fdfdfd,#ececec);"></div>
<div class="a" style="left:384px;top:492px;width:160px;height:18px;background:#dcf1fd;"></div>
<div class="a" style="left:707px;top:492px;width:121px;height:18px;background:#dcf1fd;"></div>
<div class="t" style="left:351px;top:494px;width:32px;text-align:center;">2.1</div>
<div class="t" style="left:545px;top:497px;width:81px;text-align:center;">Φ10</div>
<div class="t" style="left:627px;top:497px;width:79px;text-align:center;letter-spacing:0.3px">L30*3</div>
<div class="t" style="left:625px;top:497px;width:200px;text-align:right;letter-spacing:0.3px">1.232</div>
<div class="chk" style="left:422px;top:495px"><svg width="13" height="13" viewBox="0 0 13 13" style="left:-1px;top:-1px"><path d="M1.8 6.4L5.2 9.4L11.2 3.2" fill="none" stroke="#3c3c3c" stroke-width="1.25"/></svg></div>
<div class="t" style="left:441px;top:495px;">DN80</div>
<svg class="a" style="left:411px;top:501px" width="10" height="1"><line x1="0" y1="0.5" x2="10" y2="0.5" stroke="#555" stroke-dasharray="1 1"/></svg>
<div class="a" style="left:351px;top:511px;width:32px;height:18px;background:linear-gradient(#fdfdfd,#ececec);"></div>
<div class="a" style="left:384px;top:511px;width:160px;height:18px;background:#dcf1fd;"></div>
<div class="a" style="left:707px;top:511px;width:121px;height:18px;background:#dcf1fd;"></div>
<div class="t" style="left:351px;top:513px;width:32px;text-align:center;">2.2</div>
<div class="t" style="left:545px;top:516px;width:81px;text-align:center;">Φ10</div>
<div class="t" style="left:627px;top:516px;width:79px;text-align:center;letter-spacing:0.3px">L30*3</div>
<div class="t" style="left:625px;top:516px;width:200px;text-align:right;letter-spacing:0.3px">1.198</div>
<div class="chk" style="left:422px;top:514px"><svg width="13" height="13" viewBox="0 0 13 13" style="left:-1px;top:-1px"><path d="M1.8 6.4L5.2 9.4L11.2 3.2" fill="none" stroke="#3c3c3c" stroke-width="1.25"/></svg></div>
<div class="t" style="left:441px;top:514px;">DN65</div>
<svg class="a" style="left:411px;top:520px" width="10" height="1"><line x1="0" y1="0.5" x2="10" y2="0.5" stroke="#555" stroke-dasharray="1 1"/></svg>
<div class="a" style="left:351px;top:530px;width:32px;height:18px;background:linear-gradient(#fdfdfd,#ececec);"></div>
<div class="a" style="left:384px;top:530px;width:160px;height:18px;background:#dcf1fd;"></div>
<div class="a" style="left:707px;top:530px;width:121px;height:18px;background:#dcf1fd;"></div>
<div class="t" style="left:351px;top:532px;width:32px;text-align:center;">2.3</div>
<div class="t" style="left:545px;top:535px;width:81px;text-align:center;">Φ10</div>
<div class="t" style="left:627px;top:535px;width:79px;text-align:center;letter-spacing:0.3px">L30*3</div>
<div class="t" style="left:625px;top:535px;width:200px;text-align:right;letter-spacing:0.3px">1.158</div>
<div class="chk" style="left:422px;top:533px"><svg width="13" height="13" viewBox="0 0 13 13" style="left:-1px;top:-1px"><path d="M1.8 6.4L5.2 9.4L11.2 3.2" fill="none" stroke="#3c3c3c" stroke-width="1.25"/></svg></div>
<div class="t" style="left:441px;top:533px;">DN50</div>
<svg class="a" style="left:411px;top:539px" width="10" height="1"><line x1="0" y1="0.5" x2="10" y2="0.5" stroke="#555" stroke-dasharray="1 1"/></svg>
<div class="a" style="left:351px;top:549px;width:32px;height:3px;background:linear-gradient(#fdfdfd,#ececec);"></div>
<div class="a" style="left:384px;top:549px;width:160px;height:3px;background:#dcf1fd;"></div>
<div class="a" style="left:707px;top:549px;width:121px;height:3px;background:#dcf1fd;"></div>
<svg class="a" style="left:392px;top:373px" width="1" height="105"><line x1="0.5" y1="0" x2="0.5" y2="105" stroke="#555" stroke-dasharray="1 1"/></svg>
<svg class="a" style="left:392px;top:487px" width="1" height="65"><line x1="0.5" y1="0" x2="0.5" y2="65" stroke="#555" stroke-dasharray="1 1"/></svg>
<svg class="a" style="left:410px;top:378px" width="1" height="90"><line x1="0.5" y1="0" x2="0.5" y2="90" stroke="#555" stroke-dasharray="1 1"/></svg>
<svg class="a" style="left:410px;top:492px" width="1" height="60"><line x1="0.5" y1="0" x2="0.5" y2="60" stroke="#555" stroke-dasharray="1 1"/></svg>
<div class="a" style="left:383px;top:330px;width:1px;height:222px;background:#c8c8c8;"></div>
<div class="a" style="left:544px;top:330px;width:1px;height:222px;background:#c8c8c8;"></div>
<div class="a" style="left:626px;top:330px;width:1px;height:222px;background:#c8c8c8;"></div>
<div class="a" style="left:706px;top:330px;width:1px;height:222px;background:#c8c8c8;"></div>
<div class="a" style="left:827px;top:330px;width:1px;height:222px;background:#c8c8c8;"></div>
<div class="a" style="left:351px;top:358px;width:477px;height:1px;background:#c8c8c8;"></div>
<div class="a" style="left:351px;top:377px;width:477px;height:1px;background:#c8c8c8;"></div>
<div class="a" style="left:351px;top:396px;width:477px;height:1px;background:#c8c8c8;"></div>
<div class="a" style="left:351px;top:415px;width:477px;height:1px;background:#c8c8c8;"></div>
<div class="a" style="left:351px;top:434px;width:477px;height:1px;background:#c8c8c8;"></div>
<div class="a" style="left:351px;top:453px;width:477px;height:1px;background:#c8c8c8;"></div>
<div class="a" style="left:351px;top:472px;width:477px;height:1px;background:#c8c8c8;"></div>
<div class="a" style="left:351px;top:491px;width:477px;height:1px;background:#c8c8c8;"></div>
<div class="a" style="left:351px;top:510px;width:477px;height:1px;background:#c8c8c8;"></div>
<div class="a" style="left:351px;top:529px;width:477px;height:1px;background:#c8c8c8;"></div>
<div class="a" style="left:351px;top:548px;width:477px;height:1px;background:#c8c8c8;"></div>
<div class="a" style="left:828px;top:330px;width:18px;height:222px;background:#f0f0f0;border-left:1px solid #fff"></div>
<div class="a" style="left:830px;top:347px;width:15px;height:17px;background:#cdcdcd;"></div>
<svg class="a" style="left:833px;top:336px" width="9" height="6" viewBox="0 0 9 6"><path d="M0.8 5.2L4.5 1.5L8.2 5.2" fill="none" stroke="#606060" stroke-width="1.8"/></svg>
<svg class="a" style="left:833px;top:541px" width="9" height="6" viewBox="0 0 9 6"><path d="M0.8 0.8L4.5 4.5L8.2 0.8" fill="none" stroke="#606060" stroke-width="1.8"/></svg>
<div class="a" style="left:544px;top:396px;width:82px;height:20px;background:transparent;border:2px solid #111;box-shadow:0 0 0 1px rgba(20,20,20,0.6)"></div>
<div class="a" style="left:611px;top:398px;width:13px;height:16px;background:#e1e1e1;border:1px solid #d0d0d0"></div>
<svg class="a" style="left:613px;top:400px" width="10" height="11" viewBox="0 0 10 11"><path d="M4.5 0.5v4" stroke="#111" stroke-width="1.2"/><path d="M1 4h7l-3.5 4z" fill="#111"/><path d="M1 9.5h7" stroke="#111" stroke-width="1.2"/></svg>
<div class="a" style="left:622px;top:412px;width:8px;height:8px;background:#111;border:1px solid #fff"></div>
<div class="a" style="left:350px;top:174px;width:497px;height:152px;background:transparent;border:1px solid #6e6e6e"></div>
<div class="a" style="left:350px;top:329px;width:497px;height:224px;background:transparent;border:1px solid #6e6e6e"></div>
<div class="btn" style="left:583px;top:560px;width:108px"></div>
<svg class="a" style="left:591px;top:564px" width="17" height="15" viewBox="0 0 17 15"><path d="M1 8.5L5.5 13.5L16 1.5" fill="none" stroke="#0a1a0a" stroke-width="3.2" stroke-linejoin="round"/></svg>
<div class="t" style="left:612px;top:564px;">确认生成项目</div>
<div class="btn" style="left:729px;top:560px;width:108px"></div>
<svg class="a" style="left:762px;top:565px" width="14" height="14" viewBox="0 0 14 14"><path d="M2 2L12 12M12 2L2 12" fill="none" stroke="#5a0a0a" stroke-width="3.6" stroke-linecap="round"/></svg>
<div class="t" style="left:782px;top:564px;">取消</div>
</body></html>
